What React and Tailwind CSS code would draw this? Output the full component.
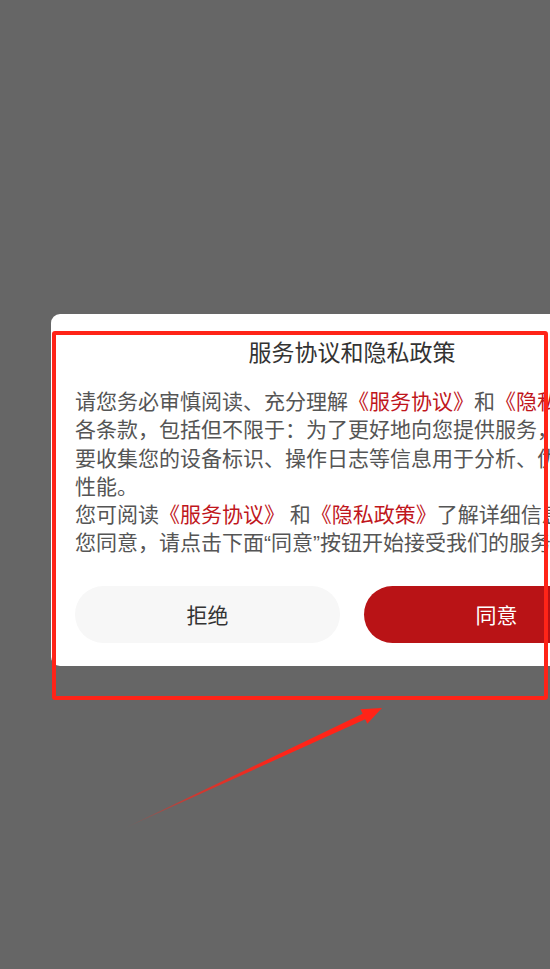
import React from "react";

const cjk = { fontFamily: '"Noto Sans CJK SC", "Noto Sans", sans-serif' };

function Link({ children }) {
  return <span className="text-[#c0161c]">{children}</span>;
}

// narrow Latin-style curly quotes
function Q({ children }) {
  return <span style={{ fontFamily: '"Liberation Sans", sans-serif' }}>{children}</span>;
}

export default function App() {
  return (
    <div className="relative w-[550px] h-[969px] overflow-hidden bg-[#666666]" style={cjk}>
      <div className="flex pt-[314px] pl-[51px]">
        <div className="w-[602px] shrink-0 bg-white rounded-[9px] px-[24px] pt-[18px] pb-[23px]">
          <h1 className="text-center text-[23px] leading-[38px] text-[#333333]">服务协议和隐私政策</h1>
          <div className="mt-[16px] text-[21px] leading-[28.3px] text-[#555555]">
            <p>
              请您务必审慎阅读、充分理解<Link>《服务协议》</Link>和<Link>《隐私政策》</Link>各条款，包括但不限于：为了更好地向您提供服务，我们需要收集您的设备标识、操作日志等信息用于分析、优化应用性能。
            </p>
            <p>
              您可阅读<Link>《服务协议》</Link> 和<Link>《隐私政策》</Link>了解详细信息。如果您同意，请点击下面<Q>“</Q>同意<Q>”</Q>按钮开始接受我们的服务。
            </p>
          </div>
          <div className="mt-[28px] grid grid-cols-2 gap-[24px]">
            <button className="h-[57px] rounded-full bg-[#f7f7f7] text-[21px] text-[#333333]">拒绝</button>
            <button className="h-[57px] rounded-full bg-[#b91316] text-[21px] text-white">同意</button>
          </div>
        </div>
      </div>

      {/* highlight frame */}
      <div className="absolute left-[52px] top-[331px] w-[496px] h-[369px] border-[4px] border-[#ff2418] rounded-[3px]" />

      {/* pointer arrow */}
      <svg className="absolute left-0 top-0" width="550" height="969" viewBox="0 0 550 969">
        <defs>
          <linearGradient id="arrowFade" x1="125" y1="828" x2="382" y2="708" gradientUnits="userSpaceOnUse">
            <stop offset="0" stopColor="#ff2418" stopOpacity="0.1" />
            <stop offset="0.25" stopColor="#ff2418" stopOpacity="0.65" />
            <stop offset="0.6" stopColor="#ff2418" stopOpacity="1" />
          </linearGradient>
        </defs>
        <polygon
          points="125,828 362.6,713.8 360.5,709.3 382,708 367.3,723.7 365.2,719.2"
          fill="url(#arrowFade)"
        />
      </svg>
    </div>
  );
}
